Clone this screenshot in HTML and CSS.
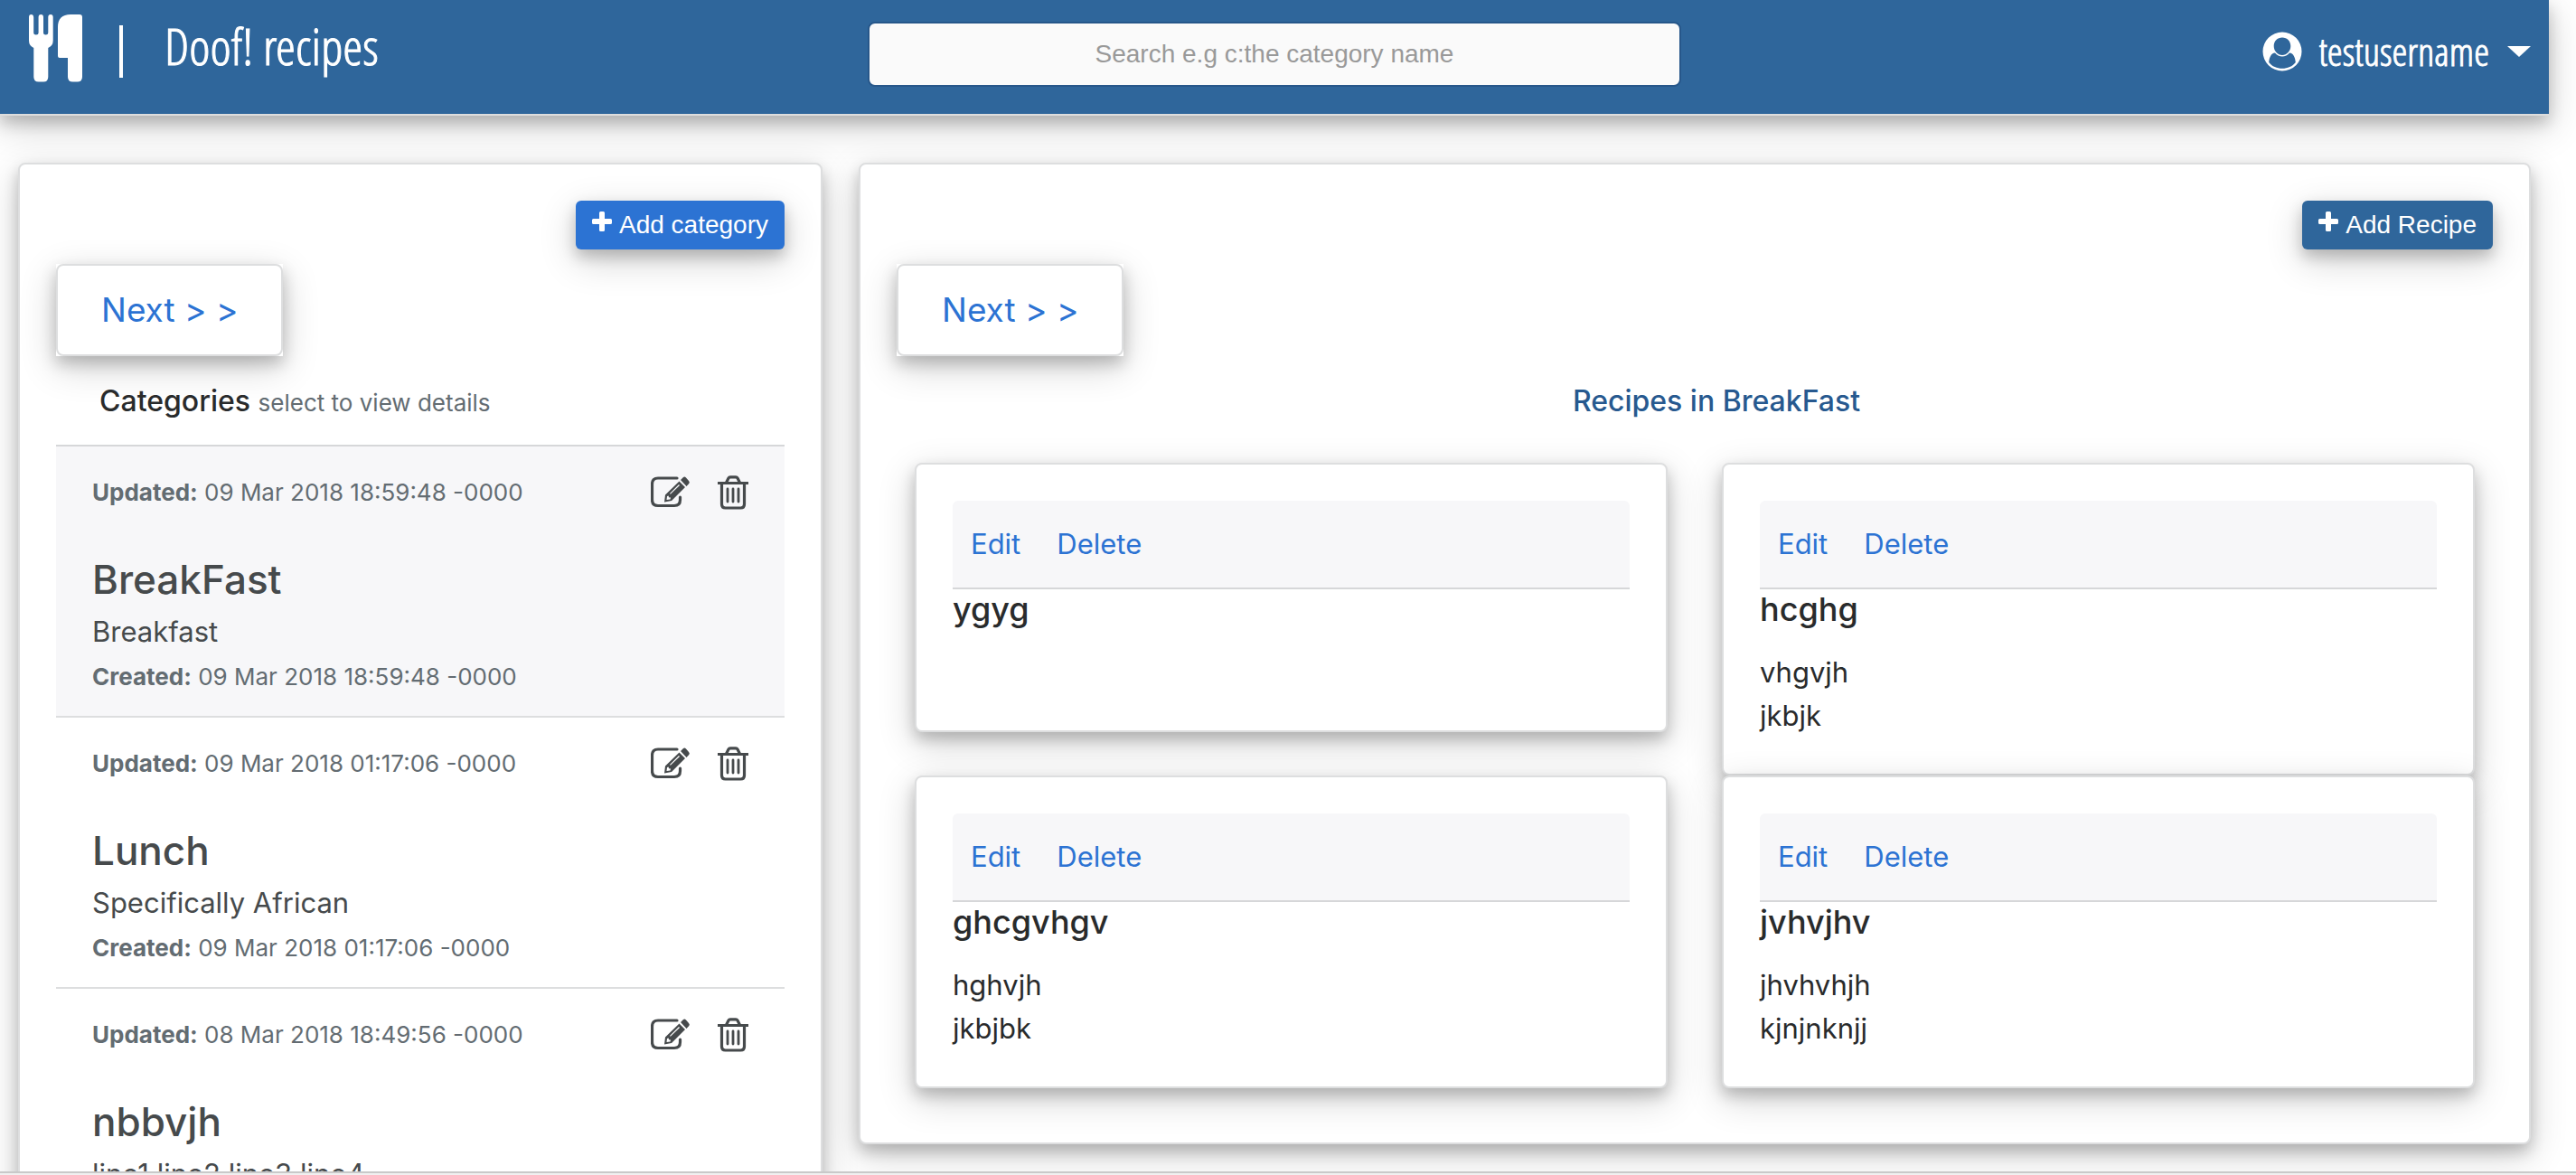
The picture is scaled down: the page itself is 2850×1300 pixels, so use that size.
FILE: index.html
```html
<!DOCTYPE html>
<html lang="en">
<head>
<meta charset="utf-8">
<title>Doof! recipes</title>
<link rel="stylesheet" href="styles.css">
</head>
<body>
<svg class="sprite" aria-hidden="true">
  <symbol id="icon-plus" viewBox="0 0 22 22"><path d="M9.500 0h3q1.500 0 1.500 1.500V8h6.500Q22 8 22 9.500v3q0 1.500-1.500 1.500H14v6.500q0 1.500-1.500 1.500h-3Q8 22 8 20.500V14H1.500Q0 14 0 12.500v-3Q0 8 1.500 8H8V1.500Q8 0 9.500 0z"/></symbol>
  <symbol id="icon-edit" viewBox="0 0 44 36">
    <path d="M29 2H8Q1.500 2 1.500 8.500V26Q1.500 32.500 8 32.500H26Q32.500 32.500 32.500 26V23" fill="none" stroke="currentColor" stroke-width="3.200" stroke-linecap="round"/>
    <path fill-rule="evenodd" d="M31.500 5.500l6.500 6.500L23 27l-8 1.500 1-8zM18 22l-.5 4 4-.5.5-2-2-.3-.3-1.700zM31 9L21 19l.8.8L32 10z"/>
    <path d="M33 4l3-3q1.500-1 3 .5l3 3.500q1.500 1.500.3 3L39.500 11z"/>
  </symbol>
  <symbol id="icon-trash" viewBox="0 0 34 38">
    <path d="M0 8.500h34M9.500 8L12 3q.6-1.200 2-1.200h6q1.400 0 2 1.200L24.500 8M4.500 9v23q0 4 4 4h17q4 0 4-4V9" fill="none" stroke="currentColor" stroke-width="3.200"/>
    <path d="M11 15v14M17 15v14M23 15v14" fill="none" stroke="currentColor" stroke-width="2.800" stroke-linecap="round"/>
  </symbol>
</svg>

<div class="viewport">
  <div class="page">
    <header class="navbar">
      <a class="brand" href="#">
        <svg class="brand-logo" viewBox="0 0 60 75" aria-hidden="true">
          <path d="M0 3q0-3 2.500-3T5.200 3v17q0 2.500 2.700 2.500T10.600 20V3q0-3 2.700-3T16 3v17q0 2.500 2.600 2.500T21.300 20V3q0-3 2.700-3t2.700 3v26q0 5.500-5.400 8v32q0 5.500-5.300 5.500h-5.300q-5.400 0-5.400-5.500V37Q0 34.500 0 29z"/>
          <path d="M46 0h10q3 0 3 3v66q0 5.500-5.500 5.500h-5q-5.500 0-5.500-5.500V48H34q-2 0-2-2V14Q32 0 46 0z"/>
        </svg>
        <span class="brand-divider"></span>
        <span class="brand-name">Doof! recipes</span>
      </a>
      <input class="search" type="text" aria-label="Search recipes" placeholder="Search e.g c:the category name">
      <button class="user-menu" type="button">
        <svg class="user-icon" viewBox="0 0 44 44" aria-hidden="true">
          <path fill-rule="evenodd" d="M22 .5a21.500 21.500 0 1 1 0 43 21.500 21.500 0 0 1 0-43zM22 6.500c-5.500 0-9.300 4-9.300 9.500S17 26 22 26s9.300-4.500 9.300-10S27.500 6.500 22 6.500zM14 23.500c-4.500.5-6.300 5-6.800 10.500 3.500 4.500 9 6.800 14.800 6.800S33.300 38.500 36.800 34c-.5-5.500-2.300-10-6.800-10.500-2 2.500-5 4-8 4s-6-1.500-8-4z"/>
        </svg>
        <span class="user-name">testusername</span>
        <svg class="user-caret" viewBox="0 0 26 12" aria-hidden="true"><path d="M0 0h26L13 12z"/></svg>
      </button>
    </header>

    <main class="columns">
      <section class="panel">
        <div class="panel-actions">
          <button class="btn btn-category" type="button"><svg class="btn-icon" aria-hidden="true"><use href="#icon-plus"/></svg>Add category</button>
        </div>
        <a class="pager" href="#"><span class="pager-label">Next &gt; &gt;</span></a>
        <h2 class="panel-title">Categories <small class="panel-hint">select to view details</small></h2>
        <ul class="category-list">
          <li class="category category-active">
            <div class="category-head">
              <span class="stamp"><b>Updated:</b> 09 Mar 2018 18:59:48 -0000</span>
              <button class="icon-btn" type="button" aria-label="Edit BreakFast"><svg class="icon-edit"><use href="#icon-edit"/></svg></button>
              <button class="icon-btn" type="button" aria-label="Delete BreakFast"><svg class="icon-trash"><use href="#icon-trash"/></svg></button>
            </div>
            <h3 class="category-name">BreakFast</h3>
            <p class="category-text">Breakfast</p>
            <p class="stamp"><b>Created:</b> 09 Mar 2018 18:59:48 -0000</p>
          </li>
          <li class="category">
            <div class="category-head">
              <span class="stamp"><b>Updated:</b> 09 Mar 2018 01:17:06 -0000</span>
              <button class="icon-btn" type="button" aria-label="Edit Lunch"><svg class="icon-edit"><use href="#icon-edit"/></svg></button>
              <button class="icon-btn" type="button" aria-label="Delete Lunch"><svg class="icon-trash"><use href="#icon-trash"/></svg></button>
            </div>
            <h3 class="category-name">Lunch</h3>
            <p class="category-text">Specifically African</p>
            <p class="stamp"><b>Created:</b> 09 Mar 2018 01:17:06 -0000</p>
          </li>
          <li class="category">
            <div class="category-head">
              <span class="stamp"><b>Updated:</b> 08 Mar 2018 18:49:56 -0000</span>
              <button class="icon-btn" type="button" aria-label="Edit nbbvjh"><svg class="icon-edit"><use href="#icon-edit"/></svg></button>
              <button class="icon-btn" type="button" aria-label="Delete nbbvjh"><svg class="icon-trash"><use href="#icon-trash"/></svg></button>
            </div>
            <h3 class="category-name">nbbvjh</h3>
            <p class="category-text">line1 line2 line3 line4</p>
          </li>
        </ul>
      </section>

      <section class="panel">
        <div class="panel-actions">
          <button class="btn btn-recipe" type="button"><svg class="btn-icon" aria-hidden="true"><use href="#icon-plus"/></svg>Add Recipe</button>
        </div>
        <a class="pager" href="#"><span class="pager-label">Next &gt; &gt;</span></a>
        <h2 class="panel-title recipes-title">Recipes in BreakFast</h2>
        <div class="recipes">
          <article class="recipe">
            <div class="recipe-bar"><a href="#">Edit</a><a href="#">Delete</a></div>
            <h3 class="recipe-name">ygyg</h3>
            <p class="recipe-text"></p>
          </article>
          <article class="recipe">
            <div class="recipe-bar"><a href="#">Edit</a><a href="#">Delete</a></div>
            <h3 class="recipe-name">hcghg</h3>
            <p class="recipe-text">vhgvjh<br>jkbjk</p>
          </article>
          <article class="recipe">
            <div class="recipe-bar"><a href="#">Edit</a><a href="#">Delete</a></div>
            <h3 class="recipe-name">ghcgvhgv</h3>
            <p class="recipe-text">hghvjh<br>jkbjbk</p>
          </article>
          <article class="recipe">
            <div class="recipe-bar"><a href="#">Edit</a><a href="#">Delete</a></div>
            <h3 class="recipe-name">jvhvjhv</h3>
            <p class="recipe-text">jhvhvhjh<br>kjnjnknjj</p>
          </article>
        </div>
      </section>
    </main>
  </div>
</div>
<footer class="bottom-bar"></footer>
</body>
</html>
```
FILE: styles.css
```css
* { box-sizing: border-box; }

:root {
  --navy: #2f669b;
  --blue: #2c73d3;
  --line: #dddedf;
  --shadow: 0 8px 16px rgba(0, 0, 0, .2), 0 12px 40px rgba(0, 0, 0, .19);
}

body {
  margin: 0;
  height: 100vh;
  display: flex;
  flex-direction: column;
  overflow: hidden;
  background: #fff;
  color: #292b2c;
  font: 31px/48px Inter, sans-serif;
}

h2, h3, p, ul { margin: 0; padding: 0; }
a { color: var(--blue); text-decoration: none; }
button { font-family: inherit; cursor: pointer; }
svg { display: block; fill: currentColor; }
.sprite { position: absolute; width: 0; height: 0; }

.viewport { flex: 1; min-height: 0; overflow: hidden; }
.page { margin-right: 30px; }

.bottom-bar {
  height: 4px;
  background: #f0f0f0;
  border-top: 2px solid #c9c9c9;
}

/* Top bar */
.navbar {
  display: grid;
  grid-template-columns: 1fr minmax(0, 900px) 1fr;
  align-items: start;
  height: 128px;
  background: var(--navy);
  border-bottom: 2px solid #ddd;
  box-shadow: var(--shadow);
  color: #fff;
  font-family: "Open Sans Condensed Light", "Open Sans Condensed", "Liberation Sans Narrow", sans-serif;
  font-weight: 300;
}
.brand { display: flex; padding: 16px 0 0 32px; color: #fff; }
.brand-logo { width: 60px; height: 75px; }
.brand-divider { width: 4px; height: 58px; margin: 12px 46px 0 40px; background: #fff; }
.brand-name { font-size: 56px; line-height: 68px; -webkit-text-stroke: 1px currentColor; }
.search {
  width: 100%;
  height: 72px;
  margin-top: 24px;
  border: 2px solid #27578a;
  border-radius: 8px;
  background: #fafafa;
  font: 28px "Liberation Sans", sans-serif;
  text-align: center;
}
.search::placeholder { color: #999; opacity: 1; }
.user-menu {
  justify-self: end;
  display: flex;
  align-items: center;
  height: 64px;
  margin: 25px 20px 0 0;
  padding: 0;
  border: 0;
  background: none;
  color: #fff;
  font-weight: 300;
}
.user-icon { width: 44px; height: 44px; }
.user-name { margin: 0 20px 0 18px; font-size: 43px; line-height: 64px; -webkit-text-stroke: 1px currentColor; }
.user-caret { width: 26px; height: 12px; }

/* Columns and panels */
.columns {
  display: grid;
  grid-template-columns: minmax(0, 89fr) minmax(0, 185fr);
  gap: 40px;
  align-items: start;
  padding: 52px 20px 0;
}
.panel {
  padding: 40px;
  border: 2px solid var(--line);
  border-radius: 8px;
  background: #fff;
  box-shadow: var(--shadow);
}
.panel-actions { display: flex; justify-content: flex-end; margin-bottom: 16px; }
.btn {
  display: flex;
  gap: 8px;
  height: 54px;
  padding: 0 18px;
  border: 0;
  border-radius: 6px;
  box-shadow: var(--shadow);
  color: #fff;
  font: 28px/54px "Liberation Sans", sans-serif;
}
.btn-icon { width: 22px; height: 22px; margin-top: 12px; }
.btn-category { background: var(--blue); }
.btn-recipe { background: var(--navy); }

.pager { display: inline-block; vertical-align: top; background: #fff; box-shadow: var(--shadow); }
.pager-label {
  display: block;
  padding: 24px 48px;
  border: 2px solid var(--line);
  border-radius: 8px;
  font-size: 37px;
  line-height: 50px;
}
.panel-title { margin: 32px 0 30px; padding-left: 48px; font-size: 32px; line-height: 36px; font-weight: 500; }
.panel-hint { color: #636c72; font-size: 26px; line-height: 26px; font-weight: 400; }
.recipes-title { color: #27598f; text-align: center; }

/* Category list */
.category-list { list-style: none; border-top: 2px solid #d6d7d9; }
.category { padding: 31px 40px 23px; border-bottom: 2px solid var(--line); color: #464a4c; }
.category-active { background: #f7f7f9; }
.category-head { display: flex; align-items: center; height: 40px; margin-bottom: 50px; }
.stamp { flex: 1; color: #636c72; font-size: 26px; line-height: 40px; }
.icon-btn { margin-left: 30px; padding: 0; border: 0; background: none; color: #464a4c; }
.icon-edit { width: 44px; height: 36px; }
.icon-trash { width: 34px; height: 38px; }
.category-name { margin-bottom: 8px; font-size: 44px; line-height: 52px; font-weight: 500; }
.category-text { margin-bottom: 6px; }

/* Recipe cards */
.recipes {
  display: grid;
  grid-template-columns: 1fr 1fr;
  column-gap: 60px;
  align-items: start;
  padding: 20px;
}
.recipe {
  padding: 40px;
  border: 2px solid var(--line);
  border-radius: 8px;
  background: #fff;
  box-shadow: var(--shadow);
}
.recipe-bar {
  display: flex;
  gap: 40px;
  padding: 24px 20px;
  border-bottom: 2px solid #d6d7d9;
  border-radius: 6px 6px 0 0;
  background: #f7f7f9;
}
.recipe-name { margin-bottom: 24px; font-size: 36px; line-height: 44px; font-weight: 500; }
.recipe-text { min-height: 48px; }
```
